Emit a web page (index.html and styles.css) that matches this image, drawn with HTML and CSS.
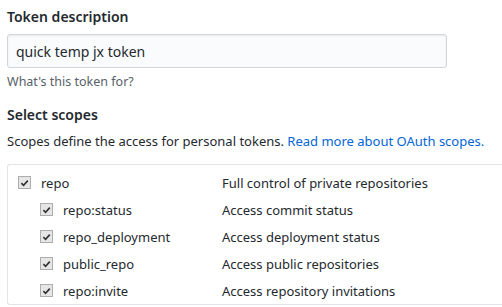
FILE: index.html
```html
<!DOCTYPE html>
<html lang="en">
<head>
    <meta charset="UTF-8">
    <title>New personal access token</title>
    <link rel="stylesheet" href="styles.css">
</head>
<body>
    <div class="form-group">
        <label class="form-label" for="tokenDescription">Token description</label>
        <input class="form-control" id="tokenDescription" type="text" value="quick temp jx token">
        <p class="note">What's this token for?</p>
    </div>

    <div class="form-group">
        <div class="form-label">Select scopes</div>
        <p class="scopes-intro">Scopes define the access for personal tokens. <a href="#">Read more about OAuth scopes.</a></p>

        <div class="scopes-box">
            <div class="scope-row parent">
                <span class="scope-name"><span class="check"><svg viewBox="0 0 12 12" width="12" height="12"><path d="M2.6 6.2 L5 8.6 L9.6 3.4" fill="none" stroke="#333" stroke-width="1.8"/></svg></span>repo</span>
                <span class="scope-desc">Full control of private repositories</span>
            </div>
            <div class="scope-row child">
                <span class="scope-name"><span class="check"><svg viewBox="0 0 12 12" width="12" height="12"><path d="M2.6 6.2 L5 8.6 L9.6 3.4" fill="none" stroke="#333" stroke-width="1.8"/></svg></span>repo:status</span>
                <span class="scope-desc">Access commit status</span>
            </div>
            <div class="scope-row child">
                <span class="scope-name"><span class="check"><svg viewBox="0 0 12 12" width="12" height="12"><path d="M2.6 6.2 L5 8.6 L9.6 3.4" fill="none" stroke="#333" stroke-width="1.8"/></svg></span>repo_deployment</span>
                <span class="scope-desc">Access deployment status</span>
            </div>
            <div class="scope-row child">
                <span class="scope-name"><span class="check"><svg viewBox="0 0 12 12" width="12" height="12"><path d="M2.6 6.2 L5 8.6 L9.6 3.4" fill="none" stroke="#333" stroke-width="1.8"/></svg></span>public_repo</span>
                <span class="scope-desc">Access public repositories</span>
            </div>
            <div class="scope-row child">
                <span class="scope-name"><span class="check"><svg viewBox="0 0 12 12" width="12" height="12"><path d="M2.6 6.2 L5 8.6 L9.6 3.4" fill="none" stroke="#333" stroke-width="1.8"/></svg></span>repo:invite</span>
                <span class="scope-desc">Access repository invitations</span>
            </div>
        </div>
    </div>
</body>
</html>
```

FILE: styles.css
```css
body {
    font-family: 'Noto Sans', sans-serif;
    font-size: 13px;
    color: #24292e;
    margin: 0;
    padding: 6px 0 0 7px;
    background: white;
    overflow: hidden;
}
.form-group {
    margin-bottom: 14px;
}
.form-label {
    display: block;
    font-weight: 600;
    font-size: 14px;
    line-height: 22px;
    margin-bottom: 6px;
}
.form-control {
    display: block;
    box-sizing: border-box;
    width: 440px;
    height: 34px;
    padding: 6px 8px;
    font-family: inherit;
    font-size: 14px;
    color: #24292e;
    background: #fafbfc;
    border: 1px solid #d1d5da;
    border-radius: 3px;
    box-shadow: inset 0 1px 2px rgba(27,31,35,0.075);
}
.note {
    margin: 5px 0 0;
    font-size: 12.5px;
    color: #586069;
}
.scopes-intro {
    margin: 0 0 14px;
}
.scopes-intro a {
    color: #0366d6;
    text-decoration: none;
}
.scopes-box {
    box-sizing: border-box;
    width: 495px;
    border: 1px solid #e1e4e8;
    border-right: none;
    border-radius: 3px 0 0 3px;
    padding: 4px 0 0 10px;
}
.scope-row {
    display: flex;
    height: 27px;
    align-items: center;
}
.scope-name {
    display: flex;
    align-items: center;
    width: 204px;
}
.child .scope-name {
    padding-left: 22px;
    width: 182px;
}
.check {
    display: inline-flex;
    box-sizing: border-box;
    width: 13px;
    height: 13px;
    margin-right: 10px;
    background: #e6e6e6;
    border: 1px solid #adadad;
}
.check svg {
    display: block;
}
.scope-desc {
    color: #24292e;
}
```
